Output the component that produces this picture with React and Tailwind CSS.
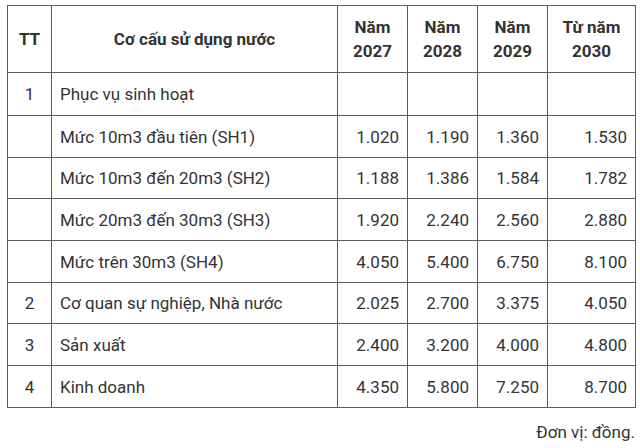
import React from 'react';

const rows = [
  { tt: '1', name: 'Phục vụ sinh hoạt', v: ['', '', '', ''], h: 'h-[43px]' },
  { tt: '', name: 'Mức 10m3 đầu tiên (SH1)', v: ['1.020', '1.190', '1.360', '1.530'], h: 'h-[42px]' },
  { tt: '', name: 'Mức 10m3 đến 20m3 (SH2)', v: ['1.188', '1.386', '1.584', '1.782'], h: 'h-[41px]' },
  { tt: '', name: 'Mức 20m3 đến 30m3 (SH3)', v: ['1.920', '2.240', '2.560', '2.880'], h: 'h-[42px]' },
  { tt: '', name: 'Mức trên 30m3 (SH4)', v: ['4.050', '5.400', '6.750', '8.100'], h: 'h-[42px]' },
  { tt: '2', name: 'Cơ quan sự nghiệp, Nhà nước', v: ['2.025', '2.700', '3.375', '4.050'], h: 'h-[41px]' },
  { tt: '3', name: 'Sản xuất', v: ['2.400', '3.200', '4.000', '4.800'], h: 'h-[42px]' },
  { tt: '4', name: 'Kinh doanh', v: ['4.350', '5.800', '7.250', '8.700'], h: 'h-[42px]' },
];

const cell = 'border border-[#5c5c5c] px-[8px] py-0';

export default function App() {
  return (
    <div className="bg-white w-[640px] h-[448px] pt-[5px] pl-[7px] text-[#333] text-[17px] leading-[24px]" style={{ fontFamily: 'Roboto, "Liberation Sans", sans-serif' }}>
      <table className="border-collapse table-fixed w-[628px]">
        <colgroup>
          <col className="w-[44px]" />
          <col className="w-[286px]" />
          <col className="w-[70px]" />
          <col className="w-[70px]" />
          <col className="w-[70px]" />
          <col className="w-[88px]" />
        </colgroup>
        <thead>
          <tr className="h-[67px] font-bold text-center">
            <th className={cell}>TT</th>
            <th className={cell}>Cơ cấu sử dụng nước</th>
            <th className={cell}>Năm<br />2027</th>
            <th className={cell}>Năm<br />2028</th>
            <th className={cell}>Năm<br />2029</th>
            <th className={cell}>Từ năm<br />2030</th>
          </tr>
        </thead>
        <tbody>
          {rows.map((r, i) => (
            <tr key={i} className={r.h}>
              <td className={`${cell} text-center`}>{r.tt}</td>
              <td className={cell}>{r.name}</td>
              {r.v.map((x, j) => (
                <td key={j} className={`${cell} text-right`}>{x}</td>
              ))}
            </tr>
          ))}
        </tbody>
      </table>
      <div className="w-[628px] text-right mt-[12px]">Đơn vị: đồng.</div>
    </div>
  );
}
